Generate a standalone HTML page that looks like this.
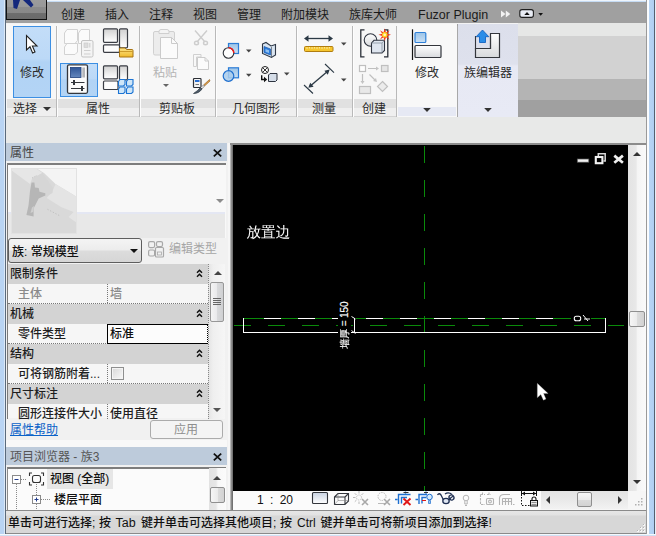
<!DOCTYPE html>
<html lang="zh-CN">
<head>
<meta charset="utf-8">
<title>Revit</title>
<style>
*{box-sizing:border-box;margin:0;padding:0}
html,body{width:656px;height:536px;overflow:hidden;background:#e8e9e8}
body{font-family:"Liberation Sans","Noto Sans CJK SC",sans-serif;font-size:12px;color:#1e1e1e;position:relative}
.a{position:absolute}
.t{position:absolute;white-space:nowrap;line-height:14px;height:14px}
/* frame */
#frameL{left:0;top:0;width:6px;height:536px;background:linear-gradient(90deg,#b9d4f3 0,#b9d4f3 4.500px,#dbe8f7 4.500px)}
#frameLd{left:5px;top:0;width:1px;height:536px;background:#5a6a7c}
#frameR{left:648px;top:0;width:8px;height:536px;background:linear-gradient(90deg,#fafcfe 0,#fafcfe 1.500px,#b8d4f3 1.500px,#b0cff2 5.700px,#55606e 5.700px,#55606e 6.700px,#e4edf8 6.700px)}
#frameRw{left:646px;top:0;width:2px;height:536px;background:linear-gradient(90deg,#9a9a9a 0,#9a9a9a 1px,#fafbfc 1px)}
#frameT{left:47px;top:0;width:609px;height:2px;background:linear-gradient(#eef4fb 0,#eef4fb 1px,#c5dbf3 1px)}
#frameB{left:0;top:534px;width:656px;height:2px;background:linear-gradient(#f4f8fc 0,#f4f8fc 1px,#cfe0f4 1px)}
/* tab bar */
#tabbar{left:6px;top:2px;width:640px;height:21px;background:#a0a0a0}
#appbtn{left:6px;top:0;width:41px;height:20px;background:linear-gradient(#9c9c9c 0,#989898 7px,#8b8b8b 7px,#888 13px,#6e6e6e 13px,#6a6a6a 100%);border:1px solid #111;border-top:none}
.tab{top:8px;color:#1a1a1a}
/* ribbon */
#ribbon{left:6px;top:24px;width:640px;height:93px;background:#a0a0a0}
.pnl{position:absolute;top:0;height:93px;background:#f7f7f7}
.pt{position:absolute;left:0;right:0;top:75px;height:16px;background:#e4e4e4}
.ptx{position:absolute;top:77px;left:0;right:0;text-align:center;line-height:14px;color:#2a2a2a}
.sep{position:absolute;top:2px;width:1px;height:91px;background:#b9b9b9}
.dn{width:0;height:0;border-left:4px solid transparent;border-right:4px solid transparent;border-top:4px solid #333}

/* left palettes */
.ptitle{position:absolute;left:6px;width:221px;height:18px;background:#bdcbdb}
.hdr{position:absolute;left:8px;width:200px;height:20px;background:#d3d3d3}
.row{position:absolute;left:8px;width:200px;height:20px;background:#f6f6f6;border-bottom:1px dotted #777}
.hdr span,.row span{font-weight:500;position:absolute;line-height:14px;top:3px;white-space:nowrap}
.vd{position:absolute;left:99px;top:0;height:19px;width:0;border-left:1px dotted #777}
.chev{position:absolute;left:187.500px;top:4.500px}
#canvas{left:233px;top:145px;width:395px;height:346px;background:#000}
</style>
</head>
<body>
<!-- ribbon tab bar -->
<div class="a" id="tabbar"></div>
<div class="a" id="frameT"></div>
<div class="a" id="appbtn"></div>
<svg class="a" style="left:6px;top:0" width="41" height="20" viewBox="0 0 41 20"><path d="M7 0 L14 0 L11 9 L7.5 8 Z" fill="#14287c"/><path d="M17 0 L24 0 L27.500 5 L25 7.500 Z" fill="#14287c"/></svg>
<span class="t tab" style="left:61px">创建</span>
<span class="t tab" style="left:105px">插入</span>
<span class="t tab" style="left:149px">注释</span>
<span class="t tab" style="left:193px">视图</span>
<span class="t tab" style="left:237px">管理</span>
<span class="t tab" style="left:281px">附加模块</span>
<span class="t tab" style="left:349px">族库大师</span>
<span class="t tab" style="left:418px;font-size:12.5px">Fuzor Plugin</span>

<svg class="a" style="left:496px;top:6px" width="54" height="16" viewBox="496 6 54 16"><path d="M501 10.500 L505.500 14 L501 17.600 Z M505.800 10.500 L510.300 14 L505.800 17.600 Z" fill="#f2f2f2"/><rect x="519.800" y="9.600" width="13.600" height="7.800" rx="2.200" fill="#e9edf5" stroke="#1e1e1e" stroke-width="1.100"/><path d="M524.300 15 H529.700 L527 12 Z" fill="#111"/><path d="M538.300 13 H543 L540.650 15.800 Z" fill="#111"/></svg>
<!-- ribbon body -->
<div class="a" style="left:6px;top:23px;width:518px;height:1px;background:#f3f3f3"></div><div class="a" style="left:518px;top:23px;width:128px;height:1px;background:#e6e7e6"></div>

<div class="a" id="ribbon">
 <!-- empty stripes on right -->
 <div class="a" style="left:512px;top:0;width:128px;height:12px;background:#e6e7e6"></div>
 <div class="a" style="left:512px;top:12px;width:128px;height:43px;background:#d2d2d2"></div>
 <div class="a" style="left:512px;top:55px;width:128px;height:21px;background:#b4b4b4"></div>
 <div class="a" style="left:512px;top:76px;width:128px;height:17px;background:#a0a0a0"></div>
 <!-- panels -->
 <div class="pnl" style="left:0;width:391px"></div>
 <div class="a" style="left:1px;top:75px;width:389px;height:9px;background:#e1e1e1"></div>
 <div class="a" style="left:1px;top:84px;width:389px;height:8px;background:#efefef"></div><div class="a" style="left:1px;top:92px;width:389px;height:1px;background:#d4d4d4"></div>
 <div class="sep" style="left:50px"></div><div class="sep" style="left:51px;background:#fdfdfd"></div>
 <div class="sep" style="left:133px"></div><div class="sep" style="left:134px;background:#fdfdfd"></div>
 <div class="sep" style="left:209px"></div><div class="sep" style="left:210px;background:#fdfdfd"></div>
 <div class="sep" style="left:290px"></div><div class="sep" style="left:291px;background:#fdfdfd"></div>
 <div class="sep" style="left:346px"></div><div class="sep" style="left:347px;background:#fdfdfd"></div>
 <div class="sep" style="left:390px"></div>
 <!-- panel 7 Modify -->
 <div class="pnl" style="left:391px;width:60px;background:#f8f8f8"></div>
 <div class="a" style="left:392px;top:83px;width:58px;height:9px;background:#e6e9f4"></div>
 <div class="sep" style="left:451px;background:#a8a8a8"></div>
 <!-- panel 8 Family editor -->
 <div class="pnl" style="left:452px;width:60px;background:linear-gradient(#dcdfeb 0,#dee1ed 40px,#e7e9f4 42px,#e8eaf5 100%)"></div>
 <!-- titles -->
 <span class="t" style="left:7px;top:78px;color:#2a2a2a">选择</span>
 <div class="a dn" style="left:36.500px;top:83px"></div>
 <span class="t" style="left:80px;top:78px;color:#2a2a2a">属性</span>
 <span class="t" style="left:153px;top:78px;color:#2a2a2a">剪贴板</span>
 <span class="t" style="left:226px;top:78px;color:#2a2a2a">几何图形</span>
 <span class="t" style="left:306px;top:78px;color:#2a2a2a">测量</span>
 <span class="t" style="left:356px;top:78px;color:#2a2a2a">创建</span>
 <!-- select panel: Modify big button -->
 <div class="a" style="left:7px;top:2px;width:38px;height:72px;border:1px solid #3c8fe3;background:linear-gradient(#c3ddf8 0,#bcd9f7 45%,#b1d3f5 50%,#b3d4f5 100%)"></div>
 <svg class="a" style="left:19px;top:10px" width="15" height="22" viewBox="0 0 15 22"><path d="M1.500 1.500 L1.500 16 L5 12.800 L7.600 19 L10 18 L7.400 12 L12 12 Z" fill="#fff" stroke="#222" stroke-width="1.100"/></svg>
 <span class="t" style="left:14px;top:42px;color:#2a2a2a">修改</span>
 <!-- big labels -->
 <span class="t" style="left:147px;top:42px;color:#b4b4b4">粘贴</span>
 <div class="a" style="left:157px;top:60px;width:0;height:0;border-left:3px solid transparent;border-right:3px solid transparent;border-top:3px solid #666"></div>
 <span class="t" style="left:409px;top:42px;color:#2a2a2a">修改</span>
 <span class="t" style="left:458px;top:42px;color:#2a2a2a">族编辑器</span>
 <!-- properties active button -->
 <div class="a" style="left:54px;top:39px;width:38px;height:34px;border:1px solid #3c8fe3;background:linear-gradient(#c3ddf8 0,#bcd9f7 45%,#b1d3f5 50%,#b3d4f5 100%)"></div>
 <!--ICONS-->
</div>



<!-- Properties palette -->
<div class="a" style="left:6px;top:117px;width:640px;height:26px;background:#e8e9e8"></div>
<div class="a" style="left:6px;top:143px;width:225px;height:367px;background:#f1f1f1"></div>
<div class="ptitle" style="top:143px"></div>
<span class="t" style="left:10px;top:146px;color:#444">属性</span>
<svg class="a" style="left:213px;top:148.500px" width="9" height="8" viewBox="0 0 9 8"><path d="M0.800 0.600 L8.200 7.400 M8.200 0.600 L0.800 7.400" stroke="#111" stroke-width="1.700"/></svg>
<!-- type selector -->
<div class="a" style="left:7px;top:163px;width:219px;height:75px;background:#f8f8f8;border-top:2px solid #7d7d7d;border-left:1px solid #8a8a8a"></div>
<div class="a" style="left:8px;top:212px;width:217px;height:2px;background:#e4e7f3"></div>
<div class="a" style="left:8px;top:214px;width:217px;height:24px;background:#e8e8e8"></div>
<div class="a" style="left:11px;top:168px;width:66px;height:66px;background:#dcdcdc"></div>
<svg class="a" style="left:11px;top:168px" width="66" height="66" viewBox="0 0 66 66"><rect width="66" height="66" fill="#d9d9d9"/><path d="M1 0.500 L25 0.500 L31.400 5 L21 10.700 L19 16 L1 2.700 Z" fill="#e6e6e6"/><path d="M25 0 L66 0 L66 29 L44.500 16 L33 5 Z" fill="#f4f4f4"/><path d="M44.500 16 L66 29 L66 55 L57.500 49 L62.600 44 L50 39 L35.700 30 L41.500 23 Z" fill="#e4e4e4"/><path d="M21 10.700 L31.400 5 L42 20 L41.500 25 L34 29 L28 24 L24 19 Z" fill="#d6d6d6"/><path d="M20.500 14.400 L23.400 14.400 L24 19.500 L27.700 20 L28.500 23.800 L34.300 25.300 L34.300 27.500 L27.700 30.400 L22.600 40.500 L22.600 48.500 L15.400 47 L17.500 37.600 L19 23 Z" fill="#b6b6b6"/><path d="M21 39.500 L23 38 L22 44 L19.500 45 Z" fill="#cfcfcf"/><path d="M21 10 L26 7.500" stroke="#bdbdbd" stroke-width="0.800" stroke-dasharray="1.500 1" fill="none"/><path d="M36.500 41.300 L48.800 47.800" stroke="#bebebe" stroke-width="1" stroke-dasharray="1.200 1.800" fill="none"/><rect x="0.500" y="0.500" width="65" height="65" fill="none" stroke="#e2e2e2" stroke-width="1"/></svg>
<div class="a" style="left:216px;top:199px;width:0;height:0;border-left:4px solid transparent;border-right:4px solid transparent;border-top:4px solid #8c8c8c"></div>
<!-- combo -->
<div class="a" style="left:8px;top:238px;width:134px;height:25px;border:1px solid #5e5e5e;border-radius:3px;background:linear-gradient(#f4f4f4 0,#ececec 48%,#dcdcdc 52%,#d6d6d6 100%)"></div>
<span class="t" style="left:12px;top:244.500px;color:#111;font-weight:500">族: 常规模型</span>
<div class="a" style="left:130px;top:249px;width:0;height:0;border-left:4px solid transparent;border-right:4px solid transparent;border-top:4px solid #111"></div>
<svg class="a" style="left:148px;top:241px" width="17" height="17" viewBox="0 0 17 17"><g fill="none" stroke="#a8a8a8" stroke-width="1.200"><rect x="0.600" y="0.600" width="6" height="6" rx="1.500"/><rect x="0.600" y="9" width="6" height="6" rx="1.500"/><rect x="8.500" y="0.600" width="6" height="5" rx="1.500"/><rect x="7.500" y="6.500" width="8" height="9.500" rx="1"/></g><rect x="9.500" y="11" width="4" height="3" fill="none" stroke="#a8a8a8" stroke-width="0.800"/></svg>
<span class="t" style="left:169px;top:242px;color:#a6a6a6">编辑类型</span>
<!-- grid -->
<div class="hdr" style="top:264px"><span style="left:2px">限制条件</span><svg class="chev" width="7" height="9" viewBox="0 0 7 9"><path d="M1 3.800 L3.500 1.300 L6 3.800 M1 7.800 L3.500 5.300 L6 7.800" fill="none" stroke="#111" stroke-width="1.500"/></svg></div>
<div class="row" style="top:284px"><span style="left:10px;color:#8a8a8a">主体</span><div class="vd"></div><span style="left:102px;color:#8a8a8a">墙</span></div>
<div class="hdr" style="top:304px"><span style="left:2px">机械</span><svg class="chev" width="7" height="9" viewBox="0 0 7 9"><path d="M1 3.800 L3.500 1.300 L6 3.800 M1 7.800 L3.500 5.300 L6 7.800" fill="none" stroke="#111" stroke-width="1.500"/></svg></div>
<div class="row" style="top:324px"><span style="left:10px">零件类型</span><div class="vd"></div></div>
<div class="a" style="left:107px;top:324px;width:101px;height:20px;border:1px solid #000;border-right:1px dotted #000;background:#fcfcfc"></div>
<span class="t" style="left:110px;top:327px;color:#111;font-weight:500">标准</span>
<div class="hdr" style="top:344px"><span style="left:2px">结构</span><svg class="chev" width="7" height="9" viewBox="0 0 7 9"><path d="M1 3.800 L3.500 1.300 L6 3.800 M1 7.800 L3.500 5.300 L6 7.800" fill="none" stroke="#111" stroke-width="1.500"/></svg></div>
<div class="row" style="top:364px"><span style="left:10px">可将钢筋附着...</span><div class="vd"></div></div>
<div class="a" style="left:111px;top:367px;width:13px;height:13px;border:1px solid #8e8f8f;background:linear-gradient(135deg,#d8d8d8 0,#ececec 60%,#f8f8f8 100%);box-shadow:inset 0 0 0 1px #f4f4f4"></div>
<div class="hdr" style="top:384px"><span style="left:2px">尺寸标注</span><svg class="chev" width="7" height="9" viewBox="0 0 7 9"><path d="M1 3.800 L3.500 1.300 L6 3.800 M1 7.800 L3.500 5.300 L6 7.800" fill="none" stroke="#111" stroke-width="1.500"/></svg></div>
<div class="row" style="top:404px;height:14px;border-bottom:none"><span style="left:10px">圆形连接件大小</span><div class="vd" style="height:15px"></div><span style="left:102px">使用直径</span></div>
<div class="a" style="left:7px;top:165px;width:1px;height:254px;background:#7a7a7a"></div>
<div class="a" style="left:6px;top:440px;width:221px;height:7px;background:#f8f8f8"></div>
<!-- grid scrollbar -->
<div class="a" style="left:208px;top:264px;width:17px;height:155px;background:linear-gradient(90deg,#e3e3e3 0,#efefef 30%,#f6f6f6 100%)"></div>
<div class="a" style="left:208px;top:264px;width:1px;height:155px;border-left:1px dotted #888"></div>
<div class="a" style="left:213.500px;top:271px;width:0;height:0;border-left:4px solid transparent;border-right:4px solid transparent;border-bottom:4px solid #444"></div>
<div class="a" style="left:213px;top:408px;width:0;height:0;border-left:4px solid transparent;border-right:4px solid transparent;border-top:4px solid #555"></div>
<div class="a" style="left:210px;top:282px;width:14px;height:40px;border:1px solid #979797;border-radius:2px;background:linear-gradient(90deg,#f4f4f4 0,#e9e9eb 50%,#d9dadc 52%,#cfd0d2 100%)"></div>
<div class="a" style="left:213px;top:298px;width:8px;height:1px;background:#666;box-shadow:0 2px 0 #666,0 4px 0 #666,0 6px 0 #666"></div>
<!-- help + apply -->
<span class="t" style="left:10px;top:423px;color:#0a62c8;text-decoration:underline">属性帮助</span>
<div class="a" style="left:150px;top:420px;width:73px;height:19px;border:1px solid #ababab;border-radius:3px;background:#f4f4f4"></div>
<span class="t" style="left:174px;top:423px;color:#8e8e8e">应用</span>
<!-- project browser -->
<div class="ptitle" style="top:447px"></div>
<span class="t" style="left:10px;top:450px;color:#555">项目浏览器 - 族3</span>
<svg class="a" style="left:213px;top:452.500px" width="9" height="8" viewBox="0 0 9 8"><path d="M0.800 0.600 L8.200 7.400 M8.200 0.600 L0.800 7.400" stroke="#111" stroke-width="1.700"/></svg>
<div class="a" style="left:7px;top:466.500px;width:219px;height:44px;background:#fbfbfb;border-top:2px solid #7d7d7d;border-left:1px solid #8a8a8a"></div>
<div class="a" style="left:47px;top:469px;width:66px;height:20px;background:#e6e6e6"></div>
<span class="t" style="left:50px;top:472px;color:#111;font-weight:500">视图 (全部)</span>
<span class="t" style="left:54px;top:492.500px;color:#111;font-weight:500">楼层平面</span>
<svg class="a" style="left:10px;top:470px" width="46" height="40" viewBox="0 0 46 40"><g fill="none" stroke="#8a8a8a" stroke-width="1"><rect x="2.500" y="5.500" width="8" height="8" fill="#fff"/><rect x="22.500" y="25.500" width="8" height="8" fill="#fff"/><path d="M6.500 14 V40 M26.500 14 V25 M26.500 34 V40 M11 9.500 H16 M31 29.500 H41" stroke-dasharray="1 1"/></g><path d="M4.500 9.500 H8.500 M24.500 29.500 H28.500 M26.500 27.500 V31.500" stroke="#223c8c" stroke-width="1"/><g fill="none" stroke="#333" stroke-width="1.100"><path d="M22 3 H19.500 V6 M31 3 H33.500 V6 M19.500 12 V15 H22 M33.500 12 V15 H31"/><rect x="22.500" y="5.500" width="8" height="7" rx="2"/></g></svg>
<div class="a" style="left:209px;top:468px;width:17px;height:42px;background:linear-gradient(90deg,#e2e2e2 0,#e6e6e6 7px,#f8f8f8 9px,#fbfbfb 100%)"></div>
<div class="a" style="left:213px;top:476px;width:0;height:0;border-left:4px solid transparent;border-right:4px solid transparent;border-bottom:4px solid #444"></div>
<div class="a" style="left:210px;top:487px;width:15px;height:16px;border:1px solid #8f8f8f;border-radius:2px;background:linear-gradient(90deg,#f6f6f6 0,#ebebeb 50%,#dcdcdc 52%,#d2d2d2 100%)"></div>
<!-- canvas frame -->
<div class="a" style="left:228px;top:143px;width:418px;height:367px;background:#f6f6f6"></div>
<div class="a" style="left:230px;top:143px;width:416px;height:348px;background:#8c8c8c"></div><div class="a" style="left:230px;top:145px;width:3px;height:365px;background:linear-gradient(90deg,#cfcfcf,#8a8a8a 50%,#666)"></div>
<div class="a" id="canvas">
<svg class="a" style="left:0;top:0" width="395" height="346" viewBox="0 0 395 346" shape-rendering="crispEdges">
<path d="M191.5 1 V18 M191.5 35 V52 M191.5 69 V86 M191.5 103 V120 M191.5 137 V154 M191.5 171 V188 M191.5 205 V222 M191.5 239 V256 M191.5 273 V290 M191.5 307 V324 M191.5 341 V346 " stroke="#0a8a0a" stroke-width="1" fill="none"/>
<path d="M1 180.5 H18 M35 180.5 H52 M69 180.5 H86 M103 180.5 H120 M137 180.5 H154 M171 180.5 H188 M205 180.5 H222 M239 180.5 H256 M273 180.5 H290 M307 180.5 H324 M341 180.5 H358 M375 180.5 H391 " stroke="#0a8a0a" stroke-width="1" fill="none"/>
<path d="M10 173.5 H105 M123 173.5 H338 M358 173.5 H373" stroke="#0a8a0a" stroke-width="1" fill="none"/>
<path d="M31 173.5 H48 M65 173.5 H82 M133 173.5 H150 M167 173.5 H184 M201 173.5 H218 M235 173.5 H252 M269 173.5 H286 M303 173.5 H320 " stroke="#fff" stroke-width="1" fill="none"/>
<path d="M10.5 173 V187.5 H105 M118 187.5 H372.5 V173" stroke="#fff" stroke-width="1" fill="none"/>
<path d="M118.5 171.5 L122.5 174 M121.5 173 V188 M118.5 185.5 L122.5 188.5" stroke="#fff" stroke-width="1" fill="none" shape-rendering="auto"/>
<rect x="341.29999999999995" y="171.3" width="6.400" height="4.400" rx="2" fill="none" stroke="#fff" stroke-width="1.100" shape-rendering="auto"/>
<path d="M350 170 L355 176 M351 174 H357" stroke="#fff" fill="none" shape-rendering="auto"/>
<path d="M99 173.5 H105" stroke="#fff" stroke-width="1" fill="none"/><rect x="105" y="155" width="13" height="50" fill="#000"/><text transform="translate(115 203.5) rotate(-90)" font-size="10" fill="#fff" stroke="#fff" stroke-width="0.150" font-family="'Liberation Sans','WenQuanYi Zen Hei',sans-serif" textLength="47" lengthAdjust="spacing" shape-rendering="auto">墙厚 = 150</text>
<g shape-rendering="auto"><rect x="344.29999999999995" y="14" width="11.500" height="3.200" fill="#f0f0f0" stroke="#555" stroke-width="0.700"/><path d="M365.29999999999995 11 V8.800000000000011 H372.20000000000005 V16 H370.5" fill="none" stroke="#d8d8d8" stroke-width="1.500"/><rect x="362.79999999999995" y="12" width="6.600" height="6.200" fill="none" stroke="#f2f2f2" stroke-width="2.100"/><path d="M381.29999999999995 10.599999999999994 L389.9 17.80000000000001 M389.9 10.599999999999994 L381.29999999999995 17.80000000000001" stroke="#efefef" stroke-width="2.700"/></g>
<path d="M304.29999999999995 238.3 V252.8 L307.79999999999995 249.60000000000002 L310.4 255.2 L313 254 L310.6 248.60000000000002 H315.20000000000005 Z" fill="#fff" stroke="#888" stroke-width="0.300" shape-rendering="auto"/>
</svg>
<span class="t" style="left:13.5px;top:79px;color:#fff;font-size:14.600px;line-height:16px;height:16px;font-family:'Liberation Sans','WenQuanYi Zen Hei',sans-serif">放置边</span>
</div>

<!-- view control bar -->
<div class="a" style="left:233px;top:491px;width:308px;height:19px;background:#fbfbfb"></div>
<span class="t" style="left:257px;top:493px;color:#111;word-spacing:3px">1 : 20</span>
<!--VIEWICONS-->
<svg class="a" style="left:300px;top:488px" width="245" height="22" viewBox="300 488 245 22">
<defs><linearGradient id="vg1" x1="0" y1="0" x2="0" y2="1"><stop offset="0" stop-color="#c9d3e2"/><stop offset="1" stop-color="#ffffff"/></linearGradient></defs>
<rect x="312.500" y="492.500" width="15" height="11" rx="1" fill="url(#vg1)" stroke="#33363c" stroke-width="1.100"/>
<path d="M334.500 497 L338 493.500 H348.500 V501 L345 504.500 H334.500 Z M334.500 497 H345 V504.500 M345 497 L348.500 493.500" fill="#fafafa" stroke="#33363c" stroke-width="1.100"/>
<path d="M338 493.500 V500.500 H348.500 M338 500.500 L334.500 504.500" fill="none" stroke="#888" stroke-width="0.600"/>
<!-- sun path off -->
<g stroke="#b9b9b9" stroke-width="1" fill="none"><circle cx="359" cy="497.500" r="2.500" stroke-dasharray="1 1"/><path d="M359 491 V493.500 M359 501.500 V504 M353 497.500 H355.500 M354.800 493.300 L356.500 495 M363.200 493.300 L361.500 495 M354.800 501.700 L356.500 500"/></g>
<path d="M362 499 L368 505 M368 499 L362 505" stroke="#a8a8a8" stroke-width="1.600"/>
<!-- shadows off -->
<g stroke="#b9b9b9" stroke-width="1" fill="none"><circle cx="382" cy="496.500" r="4" stroke-dasharray="1.500 1"/><path d="M378 503.500 H385"/></g>
<path d="M384 499 L390 505 M390 499 L384 505" stroke="#a8a8a8" stroke-width="1.600"/>
<!-- crop off -->
<path d="M395 499.500 H397.500 M405.500 491.500 V493.500 M398.500 504 V494.500 H410.500 M401.500 503.500 V497.500 H407" fill="none" stroke="#1d6fd0" stroke-width="1.400"/>
<path d="M403.500 492.500 H408.500" stroke="#333" stroke-width="1"/>
<path d="M403.500 498.500 L410.500 505 M410.500 498.500 L403.500 505" stroke="#e01818" stroke-width="1.900"/>
<!-- show crop -->
<path d="M415.500 499.500 H418 M426 491.500 V493.500 M419 504 V494.500 H427 M422 503.500 V497.500 H426" fill="none" stroke="#1d6fd0" stroke-width="1.400"/>
<path d="M424 492.500 H428" stroke="#333" stroke-width="1"/>
<path d="M422 500.500 H426" stroke="#e01818" stroke-width="1"/>
<circle cx="429.500" cy="497" r="2.800" fill="#d6ebfb" stroke="#1d6fd0" stroke-width="1"/><path d="M428.500 500.500 H430.500 V503.500 H428.500 Z" fill="#9cc4ea" stroke="#1d6fd0" stroke-width="0.700"/>
<!-- glasses -->
<g fill="none" stroke="#1f2f52" stroke-width="1.300"><path d="M437.500 495 Q439 492.500 441 495 L443.500 500"/><ellipse cx="446" cy="501" rx="3.200" ry="2.600" fill="#dfe6f2"/><path d="M449 500 Q451 497 453.500 496"/><ellipse cx="451.500" cy="497.500" rx="2.400" ry="2.600" transform="rotate(-30 451.500 497.500)"/><path d="M445 494 Q448.500 491.500 452 494.500"/></g>
<!-- bulb gray -->
<g fill="none" stroke="#b4b4b4" stroke-width="1"><circle cx="466" cy="498" r="2.800"/><path d="M464.800 501 V504 H467.200 V501 M465 505.500 H467"/></g>
<!-- dotted box camera gray -->
<g fill="none" stroke="#b4b4b4" stroke-width="1.100"><path d="M480.500 494.500 H485 M487 494.500 H491 M480.500 494.500 V504.500 H485 M482.500 492.500 V494 M489 492.500 V494" stroke-dasharray="2.500 1"/><rect x="486.500" y="498.500" width="7" height="6" rx="1"/><circle cx="490" cy="501.500" r="1.400"/></g>
<!-- house gray -->
<g fill="none" stroke="#b4b4b4" stroke-width="1.100"><path d="M499.500 505 V498 Q500 494.500 504 494.500 H510"/><path d="M502.500 498.500 H511.500 V505 M502.500 498.500 V505 M505.500 498.500 V505 M508.500 498.500 V505 M502.500 501.500 H511.500"/><path d="M513 504.500 H514.500"/></g>
<!-- dimension lock -->
<g stroke="#111" fill="none" stroke-width="1"><path d="M521.500 490 V496 M536.500 490 V496 M522 493.500 H536"/><path d="M521.500 497 V506 M522 505.500 H530" stroke-dasharray="1.500 1.500"/></g>
<path d="M522 493.500 L525 491.500 V495.500 Z M536 493.500 L533 491.500 V495.500 Z" fill="#111"/>
<rect x="530.500" y="500.500" width="7" height="5.500" fill="#e8e8e8" stroke="#111" stroke-width="1"/><path d="M532 500.500 V499 Q532 497 534 497 Q536 497 536 499 V500.500" fill="none" stroke="#111" stroke-width="1.100"/>
<path d="M531.500 502.500 H536.500 M531.500 504.500 H536.500" stroke="#666" stroke-width="0.700"/>
</svg>
<!--/VIEWICONS-->
<!-- h scrollbar -->
<div class="a" style="left:541px;top:491px;width:87px;height:18px;background:linear-gradient(#e3e3e3 0,#e9e9e9 50%,#f2f2f2 100%)"></div>
<div class="a" style="left:546px;top:496px;width:0;height:0;border-top:4px solid transparent;border-bottom:4px solid transparent;border-right:4px solid #333"></div>
<div class="a" style="left:618px;top:496px;width:0;height:0;border-top:4px solid transparent;border-bottom:4px solid transparent;border-left:4px solid #333"></div>
<div class="a" style="left:577px;top:492px;width:15px;height:15px;border:1px solid #8f8f8f;border-radius:2px;background:linear-gradient(#f6f6f6 0,#ebebeb 50%,#dcdcdc 52%,#d2d2d2 100%)"></div>
<!-- v scrollbar -->
<div class="a" style="left:628px;top:145px;width:18px;height:346px;background:linear-gradient(90deg,#e3e3e3 0,#e8e8e8 8px,#f5f5f5 9.500px,#fafafa 100%)"></div>
<div class="a" style="left:633px;top:152px;width:0;height:0;border-left:4px solid transparent;border-right:4px solid transparent;border-bottom:4px solid #333"></div>
<div class="a" style="left:633px;top:480px;width:0;height:0;border-left:4px solid transparent;border-right:4px solid transparent;border-top:4px solid #333"></div>
<div class="a" style="left:629px;top:311px;width:16px;height:16px;border:1px solid #8f8f8f;border-radius:2px;background:linear-gradient(90deg,#f6f6f6 0,#ebebeb 50%,#dcdcdc 52%,#d2d2d2 100%)"></div>
<!-- grips -->
<svg class="a" style="left:633px;top:496px" width="11" height="11" viewBox="0 0 11 11"><g fill="#b0b0b0"><rect x="8" y="8" width="1.500" height="1.500"/><rect x="5" y="8" width="1.500" height="1.500"/><rect x="8" y="5" width="1.500" height="1.500"/><rect x="2" y="8" width="1.500" height="1.500"/><rect x="5" y="5" width="1.500" height="1.500"/><rect x="8" y="2" width="1.500" height="1.500"/></g></svg>
<!-- status bar -->
<div class="a" style="left:6px;top:510px;width:641px;height:24px;background:linear-gradient(#e6e6e6 0,#e2e2e2 4px,#d7d7d7 5px,#d7d7d7 100%);border-top:1px solid #8a8a8a;border-bottom:1px solid #8a8a8a"></div>
<div class="a" id="status" style="left:0;top:516px;width:640px;height:14px;color:#111;font-weight:500">
<span class="t" style="left:8px;top:0">单击可进行选择;</span>
<span class="t" style="left:99px;top:0">按</span>
<span class="t" style="left:115.500px;top:0;font-size:12.500px">Tab</span>
<span class="t" style="left:141px;top:0">键并单击可选择其他项目;</span>
<span class="t" style="left:280px;top:0">按</span>
<span class="t" style="left:297px;top:0;font-size:12px">Ctrl</span>
<span class="t" style="left:320.500px;top:0">键并单击可将新项目添加到选择!</span>
</div>

<!--ICONSVG-->
<svg class="a" style="left:0;top:24px" width="656" height="93" viewBox="0 24 656 93">
<defs>
<linearGradient id="gGray" x1="0" y1="0" x2="0" y2="1"><stop offset="0" stop-color="#d0d0d0"/><stop offset="0.55" stop-color="#ececec"/><stop offset="1" stop-color="#ffffff"/></linearGradient>
<linearGradient id="gGray2" x1="0" y1="0" x2="0" y2="1"><stop offset="0" stop-color="#ffffff"/><stop offset="1" stop-color="#d8dadd"/></linearGradient>
<linearGradient id="gBlue" x1="0" y1="0" x2="0" y2="1"><stop offset="0" stop-color="#9cc4e8"/><stop offset="1" stop-color="#c9e0f4"/></linearGradient>
<linearGradient id="gFold" x1="0" y1="0" x2="0" y2="1"><stop offset="0" stop-color="#fbe48a"/><stop offset="1" stop-color="#f0b92a"/></linearGradient>
<linearGradient id="gNavy" x1="0" y1="0" x2="0" y2="1"><stop offset="0" stop-color="#2f5596"/><stop offset="1" stop-color="#6487bd"/></linearGradient>
</defs>
<!-- icon1 disabled type properties -->
<g fill="#fbfbfb" stroke="#d2d2d2" stroke-width="1">
<path d="M64.500 33 L67 29.500 H77.500 V40.500 L75 43.500 H64.500 Z"/>
<path d="M78.500 33 L81 29.500 H89.500 V40.500 L87 43.500 H78.500 Z"/>
<path d="M64.500 47 L67 43.500 H77.500 V52 L75 54.500 H64.500 Z"/>
<rect x="81.500" y="40.500" width="11.500" height="16.500" rx="1.500" fill="#f4f4f4" stroke="#c4c4c4"/>
</g>
<rect x="84" y="43" width="4" height="4.500" fill="#dcdcdc" stroke="#c8c8c8" stroke-width="0.600"/><rect x="89" y="43" width="1.500" height="4.500" fill="#d8d8d8"/>
<path d="M84 50.500 H90.500 M84 54 H90.500" stroke="#cfcfcf" stroke-width="1"/>
<!-- icon2 family category -->
<g stroke="#3a3d44" stroke-width="1.200">
<rect x="103.500" y="28.800" width="14" height="13.500" rx="1" fill="url(#gGray)"/>
<rect x="119.500" y="28.800" width="8" height="19" rx="1" fill="url(#gGray)"/>
<rect x="103.500" y="44.800" width="16" height="7.500" rx="1" fill="#fdfdfd"/>
</g>
<path d="M119.500 57 V49 Q119.500 48 120.500 48 H125 L126.500 49.500 H132 Q133 49.500 133 50.500 V57 Z" fill="url(#gFold)" stroke="#a87412" stroke-width="1"/>
<path d="M120 51.500 H132.500" stroke="#c28d1c" stroke-width="0.800"/>
<!-- icon3 properties (active) -->
<rect x="67.500" y="64.800" width="20" height="28.500" rx="1.500" fill="#fbfbfb" stroke="#33363c" stroke-width="1.300"/>
<rect x="70.500" y="67.500" width="10.500" height="10" fill="url(#gNavy)" stroke="#1f3f7c" stroke-width="0.800"/>
<rect x="82.300" y="67.500" width="2.700" height="10" fill="#b4b6ba"/>
<path d="M71 82.500 H84.500 M71 88.500 H84.500" stroke="#33363c" stroke-width="1.100"/>
<path d="M74 80 V85 M82 86 V91" stroke="#33363c" stroke-width="2"/>
<!-- icon4 family types -->
<g stroke="#3a3d44" stroke-width="1.200">
<rect x="103.500" y="65.800" width="14" height="13" rx="1" fill="url(#gGray)"/>
<rect x="119.500" y="65.800" width="8" height="14" rx="1" fill="url(#gGray)"/>
<rect x="103.500" y="81" width="14.500" height="8.500" rx="1" fill="#fdfdfd"/>
</g>
<g fill="#cfe6f8" stroke="#1b74d4" stroke-width="1.100">
<path d="M118.500 81.500 L120 79.500 H125 V84.500 L123.500 86 H118.500 Z"/>
<path d="M126.500 81.500 L128 79.500 H133 V84.500 L131.500 86 H126.500 Z"/>
<path d="M118.500 89 L120 87 H125 V92 L123.500 93.500 H118.500 Z"/>
<path d="M126.500 89 L128 87 H133 V92 L131.500 93.500 H126.500 Z"/>
</g>
<!-- paste (disabled) -->
<rect x="153.500" y="31.500" width="21" height="23.500" rx="1.500" fill="#ececec" stroke="#d0d0d0"/>
<path d="M159 33.500 V31.500 Q159 29.500 161 29.500 H167 Q169 29.500 169 31.500 V33.500 Z" fill="#f4f4f4" stroke="#cfcfcf"/>
<path d="M160.500 37.500 H171.500 L177.500 43.500 V58.500 H160.500 Z" fill="#fbfbfb" stroke="#cbcbcb"/>
<path d="M171.500 37.500 V43.500 H177.500" fill="none" stroke="#cbcbcb"/>
<!-- scissors disabled -->
<g fill="none" stroke="#cdcdcd" stroke-width="1.400"><path d="M195 30.500 L205 42 M207 30.500 L197 42"/><ellipse cx="196.500" cy="43" rx="2" ry="1.800"/><ellipse cx="205.500" cy="43" rx="2" ry="1.800"/></g>
<!-- copy disabled -->
<path d="M193.500 54.500 H201 V57 H196.500 V66.500 H193.500 Z" fill="#f8f8f8" stroke="#d0d0d0"/>
<path d="M197.500 57.500 H205 L208.500 61 V69.500 H197.500 Z" fill="#fbfbfb" stroke="#cbcbcb"/>
<path d="M205 57.500 V61 H208.500" fill="none" stroke="#cbcbcb"/>
<!-- match type -->
<rect x="193.500" y="78.500" width="7.500" height="9" rx="0.800" fill="#f4f4f4" stroke="#2c2f35" stroke-width="1.200"/>
<rect x="195" y="80" width="4.500" height="2" fill="#2a6fd0"/>
<path d="M195.500 84.500 H199" stroke="#555" stroke-width="0.800"/>
<path d="M209.500 79.500 L210 81 L204.500 86 L203.500 85 Z" fill="#e2a04a" stroke="#8a5a1c" stroke-width="0.600"/>
<path d="M204.500 86 L203.500 85 L200.500 87.500 L202 89 Z" fill="#e9eaec" stroke="#666" stroke-width="0.600"/>
<path d="M200.500 87.500 L202 89 Q199 93.500 193.500 93.500 Q197.500 91 200.500 87.500 Z" fill="#4c5a68" stroke="#2d3640" stroke-width="0.700"/>
<!-- geometry: cut -->
<rect x="228.500" y="43.500" width="10" height="10" fill="url(#gBlue)" stroke="#2b7cd6" stroke-width="1.200"/>
<circle cx="228.500" cy="53" r="5.300" fill="#fdfdfd" stroke="#30343a" stroke-width="1.100"/>
<path d="M228.500 47.700 A5.300 5.300 0 0 1 233.800 53" fill="none" stroke="#f41818" stroke-width="1.500"/>
<path d="M246 49.500 H251.500 L248.750 52.500 Z" fill="#444"/>
<!-- geometry: wall box -->
<path d="M262.500 44 L266 42.500 L271 46 L275.500 44.500 V55 L271.500 57.500 L262.500 53.500 Z" fill="#d9e4f0" stroke="#2e3846" stroke-width="1.100"/>
<path d="M264 46.500 L270.500 49 V55 L264 52.500 Z" fill="#2a7bdc" stroke="#1b58a8" stroke-width="0.700"/>
<path d="M265.500 49 L269 50.300 V53 L265.500 51.700 Z" fill="#8fc0f0"/>
<path d="M271.500 47 V57" stroke="#4a5462" stroke-width="0.700"/>
<!-- geometry: join -->
<rect x="228.500" y="67.800" width="10" height="10" fill="url(#gBlue)" stroke="#2b7cd6" stroke-width="1.200"/>
<circle cx="228.500" cy="76" r="5.300" fill="#a9cdec" fill-opacity="0.850" stroke="#1f6fce" stroke-width="1.200"/>
<path d="M246 73.800 H251.500 L248.750 76.800 Z" fill="#444"/>
<!-- geometry: 4 -->
<circle cx="265" cy="70" r="3.500" fill="#fff" stroke="#1e1e1e" stroke-width="1"/>
<path d="M262.700 67.700 L267.300 72.300 M267.300 67.700 L262.700 72.300" stroke="#1e1e1e" stroke-width="0.900"/>
<path d="M261.700 75.300 V79.500 H264.500" fill="none" stroke="#111" stroke-width="1.400"/><path d="M264 76.800 L267.200 79.500 L264 82.200 Z" fill="#111"/>
<path d="M268.500 75 L270 73.500 H277 V80 L275.500 81.500 H268.500 Z" fill="#d5dde8" stroke="#2e3440" stroke-width="1"/>
<path d="M284 72.500 H289.500 L286.750 75.500 Z" fill="#444"/>
<!-- measure -->
<path d="M306 38.500 H331" stroke="#2c3a46" stroke-width="1.300"/>
<path d="M304 38.500 L308.500 35.300 V41.700 Z M333 38.500 L328.500 35.300 V41.700 Z" fill="#2c3a46"/>
<rect x="304.500" y="46.500" width="28.500" height="5" rx="1" fill="#f6c62e" stroke="#b07d10" stroke-width="1"/>
<path d="M307 47 V49 M309.500 47 V48.500 M312 47 V49 M314.500 47 V48.500 M317 47 V49 M319.500 47 V48.500 M322 47 V49 M324.500 47 V48.500 M327 47 V49 M329.500 47 V48.500" stroke="#fbe9a6" stroke-width="0.900"/>
<path d="M341 42.500 H346.500 L343.750 45.500 Z" fill="#444"/>
<path d="M310 86.300 L328 71" stroke="#2c3a46" stroke-width="1.300"/>
<path d="M308.300 87.800 L310.200 82.700 L313.600 86.700 Z M329.700 69.600 L327.800 74.700 L324.400 70.700 Z" fill="#2c3a46"/>
<path d="M325 64 L334 72.700 M304 85 L313 93.500" stroke="#2c3a46" stroke-width="1.100"/>
<path d="M341 78.500 H346.500 L343.750 81.500 Z" fill="#444"/>
<!-- create -->
<path d="M364.500 29.800 H360.800 V56.800 H364.500 M384 29.800 H387.800 V56.800 H384" fill="none" stroke="#2a2f38" stroke-width="1.300"/>
<circle cx="370.500" cy="40" r="6.300" fill="url(#gGray2)" stroke="#2e3440" stroke-width="1.100"/>
<path d="M371.500 43 L374 40.300 H384.500 V50.500 L382 53 H371.500 Z" fill="#dfe6f0" stroke="#2e3440" stroke-width="1.100"/>
<path d="M371.500 43 H382 V53 M382 43 L384.500 40.300" fill="none" stroke="#7a8594" stroke-width="0.700"/>
<path d="M384.700 28.500 L386 32.500 L389.500 30.300 L387.300 33.700 L391 34.800 L387.300 36 L389.500 39.500 L386 37.300 L384.700 41 L383.500 37.300 L380 39.500 L382.200 36 L378.500 34.800 L382.200 33.700 L380 30.300 L383.500 32.500 Z" fill="#f0341a"/>
<circle cx="384.700" cy="34.800" r="2.700" fill="#ffd21e"/><circle cx="384.700" cy="34.800" r="1.300" fill="#fff8c8"/>
<!-- create disabled -->
<g stroke="#bfbfbf" stroke-width="1.200" fill="none">
<rect x="359.500" y="65.500" width="6" height="6" fill="#fdfdfd"/>
<rect x="381.500" y="65.500" width="6.500" height="6" fill="#e6e6e6"/>
<path d="M368 68.500 H377 M362.500 74 V82 M369.500 74.500 L375.500 80.500"/>
<rect x="359.500" y="86.500" width="11" height="7" fill="#e8e8e8"/>
<path d="M382.500 81.500 L387.500 86.500 L382.500 91.500 L377.500 86.500 Z" fill="#ececec"/>
</g>
<path d="M379 68.500 L376 66.500 V70.500 Z M362.500 84 L360.500 81 H364.500 Z M377 82 L373 81 L376 78 Z" fill="#c4c4c4"/>
<!-- modify panel icon -->
<path d="M412.500 29.300 V60" stroke="#111" stroke-width="1.200"/>
<rect x="415" y="32.500" width="10.800" height="10" rx="1" fill="url(#gBlue)" stroke="#2f80d8" stroke-width="1.200"/>
<rect x="415" y="45.500" width="26" height="12" rx="1" fill="url(#gGray2)" stroke="#33363c" stroke-width="1.200"/>
<path d="M423.200 108 H430.800 L427 112 Z" fill="#333"/>
<!-- family editor icon -->
<path d="M490.500 33.500 H499.500 V57.500 H475.500 V48.500 H490.500 Z" fill="url(#gGray2)" stroke="#33363c" stroke-width="1.200"/>
<path d="M475.500 36 V48.500 H490.500 V36" fill="none" stroke="#33363c" stroke-width="1.100"/>
<path d="M482.500 30 L488.800 36.700 H485.500 V42.500 H479.500 V36.700 H476.200 Z" fill="#2a8de8" stroke="#1463c2" stroke-width="0.900"/>
<path d="M484.200 108 H491.800 L488 112 Z" fill="#333"/>
</svg>
<!--/ICONSVG-->
<svg class="a" style="left:636px;top:522.500px" width="10" height="10" viewBox="0 0 10 10"><g fill="#f6f6f6"><rect x="7" y="7" width="2" height="2"/><rect x="4" y="7" width="2" height="2"/><rect x="7" y="4" width="2" height="2"/><rect x="1" y="7" width="2" height="2"/><rect x="4" y="4" width="2" height="2"/><rect x="7" y="1" width="2" height="2"/></g><g fill="#b4b4b4"><rect x="7" y="7" width="1" height="1"/><rect x="4" y="7" width="1" height="1"/><rect x="7" y="4" width="1" height="1"/><rect x="1" y="7" width="1" height="1"/><rect x="4" y="4" width="1" height="1"/><rect x="7" y="1" width="1" height="1"/></g></svg>
<div class="a" id="frameL"></div>
<div class="a" id="frameLd"></div>
<div class="a" id="frameRw"></div>
<div class="a" id="frameR"></div>
<div class="a" id="frameB"></div>
</body>
</html>
